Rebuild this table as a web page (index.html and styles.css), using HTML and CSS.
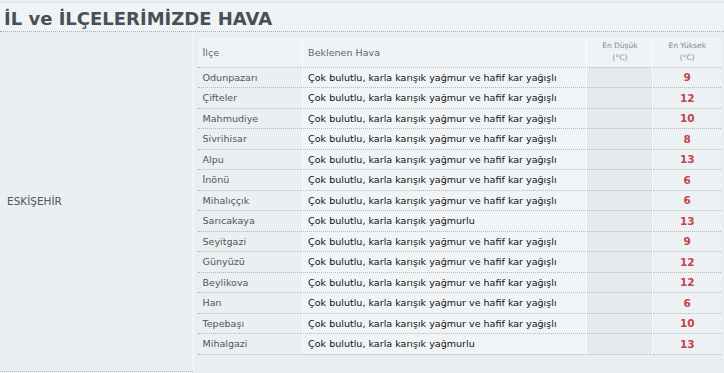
FILE: index.html
```html
<!DOCTYPE html>
<html lang="tr">
<head>
    <meta charset="UTF-8">
    <title>İl ve İlçelerimizde Hava</title>
    <link rel="stylesheet" href="styles.css">
</head>
<body>
    <div class="panel">
        <h2 class="panel-title">İL ve İLÇELERİMİZDE HAVA</h2>

        <table class="province">
            <tr>
                <td class="province-name">ESKİŞEHİR</td>
                <td class="province-body">
                    <table class="districts">
                        <thead>
                            <tr>
                                <th class="col-name">İlçe</th>
                                <th class="col-desc">Beklenen Hava</th>
                                <th class="col-low small">En Düşük<br>(°C)</th>
                                <th class="col-high small">En Yüksek<br>(°C)</th>
                            </tr>
                        </thead>
                        <tbody id="rows"></tbody>
                    </table>
                </td>
            </tr>
        </table>
    </div>

    <script>
        // District forecasts
        const mixed = 'Çok bulutlu, karla karışık yağmur ve hafif kar yağışlı';
        const rainy = 'Çok bulutlu, karla karışık yağmurlu';
        const districts = [
            ['Odunpazarı', mixed, 9],
            ['Çifteler', mixed, 12],
            ['Mahmudiye', mixed, 10],
            ['Sivrihisar', mixed, 8],
            ['Alpu', mixed, 13],
            ['İnönü', mixed, 6],
            ['Mihalıççık', mixed, 6],
            ['Sarıcakaya', rainy, 13],
            ['Seyitgazi', mixed, 9],
            ['Günyüzü', mixed, 12],
            ['Beylikova', mixed, 12],
            ['Han', mixed, 6],
            ['Tepebaşı', mixed, 10],
            ['Mihalgazi', rainy, 13]
        ];

        const tbody = document.getElementById('rows');
        districts.forEach(d => {
            const row = document.createElement('tr');
            row.innerHTML =
                `<td class="col-name">${d[0]}</td>` +
                `<td class="col-desc">${d[1]}</td>` +
                `<td class="col-low"></td>` +
                `<td class="col-high">${d[2]}</td>`;
            tbody.appendChild(row);
        });
    </script>
</body>
</html>
```

FILE: styles.css
```css
* {
    margin: 0;
    padding: 0;
    box-sizing: border-box;
}

body {
    font-family: 'DejaVu Sans', Verdana, sans-serif;
    background: #e9eff2;
    color: #222;
}

.panel {
    width: 724px;
    height: 373px;
    background: #e9eff2;
}

.panel-title {
    height: 30px;
    margin-top: 2px;
    padding: 5px 0 0 4px;
    font-size: 18px;
    font-weight: bold;
    color: #4b4f52;
    background: #eef3f6;
    border-top: 1px solid #dde3e7;
    border-bottom: 1px dotted #a9b0b5;
}

.province {
    width: 100%;
    border-collapse: collapse;
}

.province-name {
    width: 193px;
    height: 339px;
    padding-left: 7px;
    vertical-align: middle;
    font-size: 10.5px;
    color: #555;
    border-right: 1px solid #fbfcfd;
    border-bottom: 1px dotted #a9b0b5;
}

.province-body {
    vertical-align: top;
    padding: 6px 3px 0 4px;
    background: #e8eef1;
}

.districts {
    width: 100%;
    table-layout: fixed;
    border-collapse: collapse;
    font-size: 9.55px;
}

.districts th {
    height: 29px;
    font-weight: normal;
    text-align: left;
    color: #666;
    background: #eff3f5;
    border-bottom: 1px dotted #b3b8bc;
    border-left: 1px solid #fbfcfd;
    padding: 0 5px;
}

.districts th:first-child,
.districts td:first-child {
    border-left: none;
}

.districts th.small {
    font-size: 7.5px;
    text-align: center;
    color: #888;
    line-height: 12px;
    padding-bottom: 1px;
}

.districts td {
    height: 20.5px;
    padding: 0 5px;
    white-space: nowrap;
    border-bottom: 1px dotted #b3b8bc;
    border-left: 1px solid #fbfcfd;
}

.col-name {
    width: 105px;
}

.col-desc {
    width: 284px;
}

.col-low {
    width: 66px;
}

.col-high {
    width: 68px;
}

td.col-name {
    color: #555;
    background: #ebeff1;
}

td.col-desc {
    color: #111;
    background: #f1f4f6;
}

td.col-low {
    background: #e5eaed;
}

td.col-high {
    text-align: center;
    font-size: 10.5px;
    font-weight: bold;
    color: #c4424e;
    background: #edf1f3;
}
```
